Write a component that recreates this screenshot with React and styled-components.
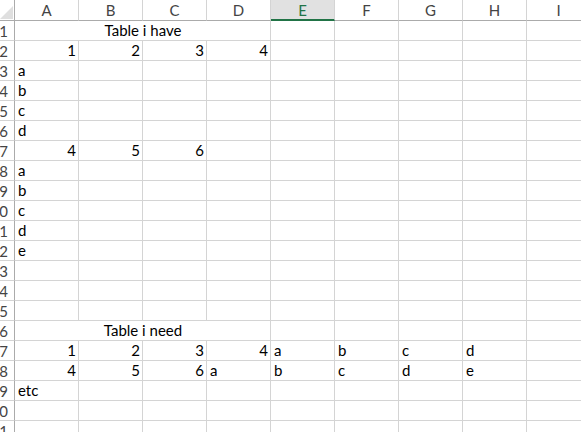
import styled, { createGlobalStyle } from "styled-components";

const GlobalStyle = createGlobalStyle`
  html, body {
    margin: 0;
    padding: 0;
    background: #fff;
    overflow: hidden;
  }
`;

const columns = ["A", "B", "C", "D", "E", "F", "G", "H", "I"];
const selectedCol = "E";

// each entry is one row; { merge } spans A:D centred
const sheet = [
  { merge: "Table i have" },
  [1, 2, 3, 4],
  ["a"],
  ["b"],
  ["c"],
  ["d"],
  [4, 5, 6],
  ["a"],
  ["b"],
  ["c"],
  ["d"],
  ["e"],
  [],
  [],
  [],
  { merge: "Table i need" },
  [1, 2, 3, 4, "a", "b", "c", "d"],
  [4, 5, 6, "a", "b", "c", "d", "e"],
  ["etc"],
  [],
  [],
];

export default function App() {
  return (
    <>
      <GlobalStyle />
      <Sheet>
        <Corner>
          <CornerMark />
        </Corner>
        {columns.map((c) => (
          <ColHeader key={c} $selected={c === selectedCol}>
            {c}
          </ColHeader>
        ))}
        {sheet.map((row, i) => {
          const cells = [];
          if (!Array.isArray(row)) {
            cells.push(
              <Cell key={i + "-m"} $span={4} $align="center">
                {row.merge}
              </Cell>
            );
            for (let j = 4; j < columns.length; j++) cells.push(<Cell key={i + "-" + j} />);
          } else {
            for (let j = 0; j < columns.length; j++) {
              const v = row[j];
              cells.push(
                <Cell key={i + "-" + j} $align={typeof v === "number" ? "right" : "left"}>
                  {v}
                </Cell>
              );
            }
          }
          return [
            <RowHeader key={"h" + i}>
              <span>{i + 1}</span>
            </RowHeader>,
            ...cells,
          ];
        })}
      </Sheet>
    </>
  );
}

const Sheet = styled.div`
  display: grid;
  grid-template-columns: 15px repeat(9, 64px);
  grid-template-rows: 21px;
  grid-auto-rows: 20px;
  font-family: Lato, "Liberation Sans", sans-serif;
  font-size: 15px;
  color: #000;
`;

const Corner = styled.div`
  box-sizing: border-box;
  border-right: 1px solid #ababab;
  border-bottom: 1px solid #ababab;
  display: flex;
  align-items: flex-end;
  justify-content: flex-end;
  padding: 0 1px 1px 0;
`;

const CornerMark = styled.div`
  width: 13px;
  height: 13px;
  background: #dfdfdf;
  clip-path: polygon(100% 0, 100% 100%, 0 100%);
`;

const ColHeader = styled.div`
  box-sizing: border-box;
  display: flex;
  align-items: center;
  justify-content: center;
  border-right: 1px solid #d4d4d4;
  border-bottom: ${(p) => (p.$selected ? "2px solid #217346" : "1px solid #ababab")};
  background: ${(p) => (p.$selected ? "#e1e1e1" : "#fff")};
  color: ${(p) => (p.$selected ? "#217346" : "#444")};
  padding-top: ${(p) => (p.$selected ? "1px" : "0")};
`;

const RowHeader = styled.div`
  box-sizing: border-box;
  display: flex;
  align-items: center;
  justify-content: flex-end;
  overflow: hidden;
  white-space: nowrap;
  padding-right: 6px;
  border-right: 1px solid #ababab;
  border-bottom: 1px solid #d4d4d4;
  color: #444;
`;

const Cell = styled.div`
  box-sizing: border-box;
  grid-column: span ${(p) => p.$span || 1};
  display: flex;
  align-items: flex-end;
  justify-content: ${(p) =>
    p.$align === "right" ? "flex-end" : p.$align === "center" ? "center" : "flex-start"};
  padding: 0 2px 1px 3px;
  border-right: 1px solid #d4d4d4;
  border-bottom: 1px solid #d4d4d4;
  white-space: nowrap;
  line-height: 18px;
`;
